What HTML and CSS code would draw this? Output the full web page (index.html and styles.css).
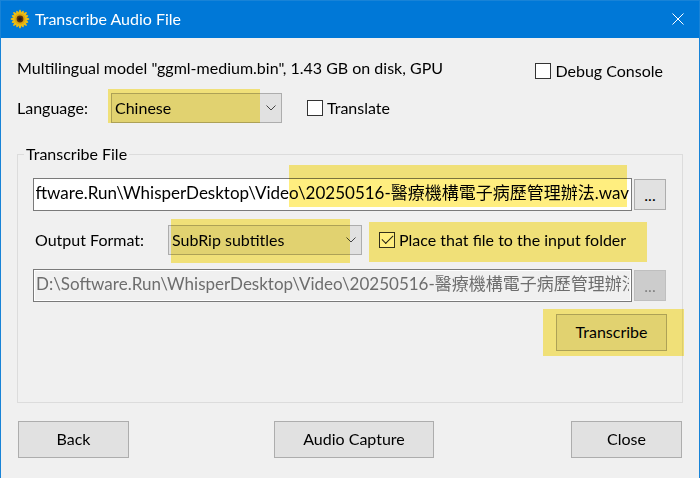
FILE: index.html
```html
<!DOCTYPE html>
<html lang="en">
<head>
<meta charset="utf-8">
<meta name="viewport" content="width=device-width, initial-scale=1">
<title>Transcribe Audio File</title>
<link rel="stylesheet" href="styles.css">
</head>
<body>
<div class="window">
  <header class="titlebar">
    <svg class="logo" viewBox="0 0 20 20" aria-hidden="true">
      <g fill="#f0bd12">
        <ellipse cx="10" cy="10" rx="9.5" ry="2"/>
        <ellipse cx="10" cy="10" rx="9" ry="2" transform="rotate(22.5 10 10)"/>
        <ellipse cx="10" cy="10" rx="9.5" ry="2" transform="rotate(45 10 10)"/>
        <ellipse cx="10" cy="10" rx="9" ry="2" transform="rotate(67.5 10 10)"/>
        <ellipse cx="10" cy="10" rx="9.5" ry="2" transform="rotate(90 10 10)"/>
        <ellipse cx="10" cy="10" rx="9" ry="2" transform="rotate(112.5 10 10)"/>
        <ellipse cx="10" cy="10" rx="9.5" ry="2" transform="rotate(135 10 10)"/>
        <ellipse cx="10" cy="10" rx="9" ry="2" transform="rotate(157.5 10 10)"/>
      </g>
      <circle cx="10" cy="10" r="5.5" fill="#dca70f"/>
      <circle cx="10" cy="10" r="3.4" fill="#5a3210"/>
      <circle cx="10" cy="10" r="1.8" fill="#2a1a1c"/>
    </svg>
    <h1 class="title">Transcribe Audio File</h1>
    <button class="dismiss" type="button" aria-label="Close window">
      <svg viewBox="0 0 12 12" aria-hidden="true"><path d="M.5.5l11 11M11.5.5l-11 11"/></svg>
    </button>
  </header>

  <main class="content">
    <div class="row model-row">
      <p class="model">Multilingual model "ggml-medium.bin", 1.43 GB on disk, GPU</p>
      <label class="check debug"><input type="checkbox">Debug Console</label>
    </div>

    <div class="row language-row">
      <label class="language-label" for="language">Language:</label>
      <div class="combo mark mark-language">
        <select id="language"><option>Chinese</option></select>
        <svg class="arrow" viewBox="0 0 10 6" aria-hidden="true"><path d="M.5.5L5 5L9.5.5"/></svg>
      </div>
      <label class="check translate"><input type="checkbox">Translate</label>
    </div>

    <fieldset class="group">
      <legend>Transcribe File</legend>
      <div class="path-row mark mark-source">
        <input id="source" class="path" type="text" aria-label="Audio file" value="D:\Software.Run\WhisperDesktop\Video\20250516-醫療機構電子病歷管理辦法.wav">
        <button class="browse" type="button" aria-label="Browse audio file">...</button>
      </div>
      <div class="row format-row">
        <label class="format-label" for="format">Output Format:</label>
        <div class="combo format mark mark-format">
          <select id="format"><option>SubRip subtitles</option></select>
          <svg class="arrow" viewBox="0 0 10 6" aria-hidden="true"><path d="M.5.5L5 5L9.5.5"/></svg>
        </div>
        <label class="check place mark mark-place"><input type="checkbox" checked>Place that file to the input folder</label>
      </div>
      <div class="path-row">
        <input class="path" type="text" aria-label="Output file" disabled value="D:\Software.Run\WhisperDesktop\Video\20250516-醫療機構電子病歷管理辦法.srt">
        <button class="browse" type="button" aria-label="Browse output file" disabled>...</button>
      </div>
      <div class="run-row">
        <div class="mark mark-run"><button class="push" type="button">Transcribe</button></div>
      </div>
    </fieldset>

    <footer class="actions">
      <button class="push" type="button">Back</button>
      <button class="push wide" type="button">Audio Capture</button>
      <button class="push" type="button">Close</button>
    </footer>
  </main>
</div>
<script src="script.js"></script>
</body>
</html>
```
FILE: styles.css
```css
* {
  box-sizing: border-box;
}

body {
  margin: 0;
  background: #f0f0f0;
  color: #000;
  font: 16px/20px Lato, "Noto Sans CJK TC", sans-serif;
}

button,
input,
select {
  margin: 0;
  color: inherit;
  font: inherit;
}

.window {
  min-height: 100vh;
  border: solid #1883d7;
  border-width: 1px 1px 0;
  background: #f0f0f0;
}

.titlebar {
  display: flex;
  align-items: center;
  height: 37px;
  padding: 0 15px 2px 9px;
  background: #0078d7;
  color: #fff;
}

.logo {
  width: 20px;
  height: 20px;
}

.title {
  flex: 1;
  margin: 0 0 0 5px;
  font-size: 16px;
  font-weight: 400;
}

.dismiss {
  display: flex;
  padding: 0;
  border: 0;
  background: none;
}

.dismiss svg {
  width: 12px;
  height: 12px;
  fill: none;
  stroke: #fff;
}

.content {
  padding: 20px 16px;
}

.row {
  display: flex;
  align-items: center;
}

.model-row {
  justify-content: space-between;
  align-items: flex-start;
  padding-right: 20px;
}

.model {
  margin: 0;
}

.check {
  display: flex;
  align-items: center;
  gap: 4px;
}

.check input {
  position: relative;
  appearance: none;
  width: 16px;
  height: 16px;
  border: 1px solid #333;
  background: #fff;
}

.check input:checked::after {
  content: "";
  position: absolute;
  left: 2px;
  top: 2px;
  width: 10px;
  height: 5px;
  border: solid #222;
  border-width: 0 0 1px 1px;
  transform: rotate(-45deg);
}

.debug {
  margin-top: 3px;
}

.language-row {
  height: 30px;
  margin-top: 12px;
}

.language-label {
  width: 94px;
}

.combo {
  width: 171px;
}

.combo select {
  display: block;
  appearance: none;
  width: 100%;
  height: 30px;
  padding: 0 24px 0 3px;
  border: 1px solid #adadad;
  border-radius: 0;
  background: #e1e1e1;
}

.arrow {
  position: absolute;
  right: 6px;
  top: 12px;
  width: 10px;
  height: 6px;
  fill: none;
  stroke: #444;
  pointer-events: none;
}

.translate {
  margin-left: 25px;
}

.mark {
  position: relative;
}

.mark::after {
  content: "";
  position: absolute;
  background: #ffee7f;
  mix-blend-mode: multiply;
  pointer-events: none;
}

.mark-language::after {
  inset: -4px 22px 0 -3px;
}

.mark-source::after {
  inset: -13px 39px 4px 256px;
}

.mark-format::after {
  inset: -6px 12px -8px 3px;
}

.mark-place::after {
  inset: -8px -21px -12px -10px;
}

.mark-run::after {
  inset: -5px -17px -5px -13px;
}

.group {
  min-width: 0;
  margin: 21px 0 0;
  padding: 14px 16px 51px 15px;
  border: 1px solid #dcdcdc;
}

.group legend {
  margin-left: -9px;
  padding: 0 2px;
}

.path-row {
  display: flex;
  align-items: center;
  gap: 2px;
}

.path {
  flex: 1;
  min-width: 0;
  height: 33px;
  padding: 0 2px 6px;
  border: 1px solid #7a7a7a;
  border-radius: 0;
  background: #fff;
  font-size: 17px;
}

.path:disabled {
  border-color: #7a7a7a;
  background: #f0f0f0;
  box-shadow: inset 0 0 0 1px #fff;
  color: #6d6d6d;
}

.browse {
  width: 32px;
  height: 31px;
  padding: 0;
  border: 1px solid #adadad;
  background: #e1e1e1;
}

.browse:disabled {
  border-color: #bfbfbf;
  background: #ccc;
  color: #838383;
}

.format-row {
  height: 30px;
  margin: 14px 0;
}

.format-label {
  width: 135px;
  padding-left: 2px;
}

.format {
  width: 194px;
}

.place {
  margin-left: 17px;
}

.run-row {
  display: flex;
  justify-content: flex-end;
  margin: 12px -1px 0 0;
}

.push {
  display: block;
  width: 111px;
  height: 37px;
  padding: 0 0 1px;
  border: 1px solid #adadad;
  background: #e1e1e1;
}

.wide {
  width: 160px;
  margin-left: 8px;
}

.actions {
  display: flex;
  justify-content: space-between;
  margin-top: 18px;
  padding: 0 1px;
}
```
FILE: script.js
```js
const source = document.getElementById("source");
source.scrollLeft = source.scrollWidth;
```
